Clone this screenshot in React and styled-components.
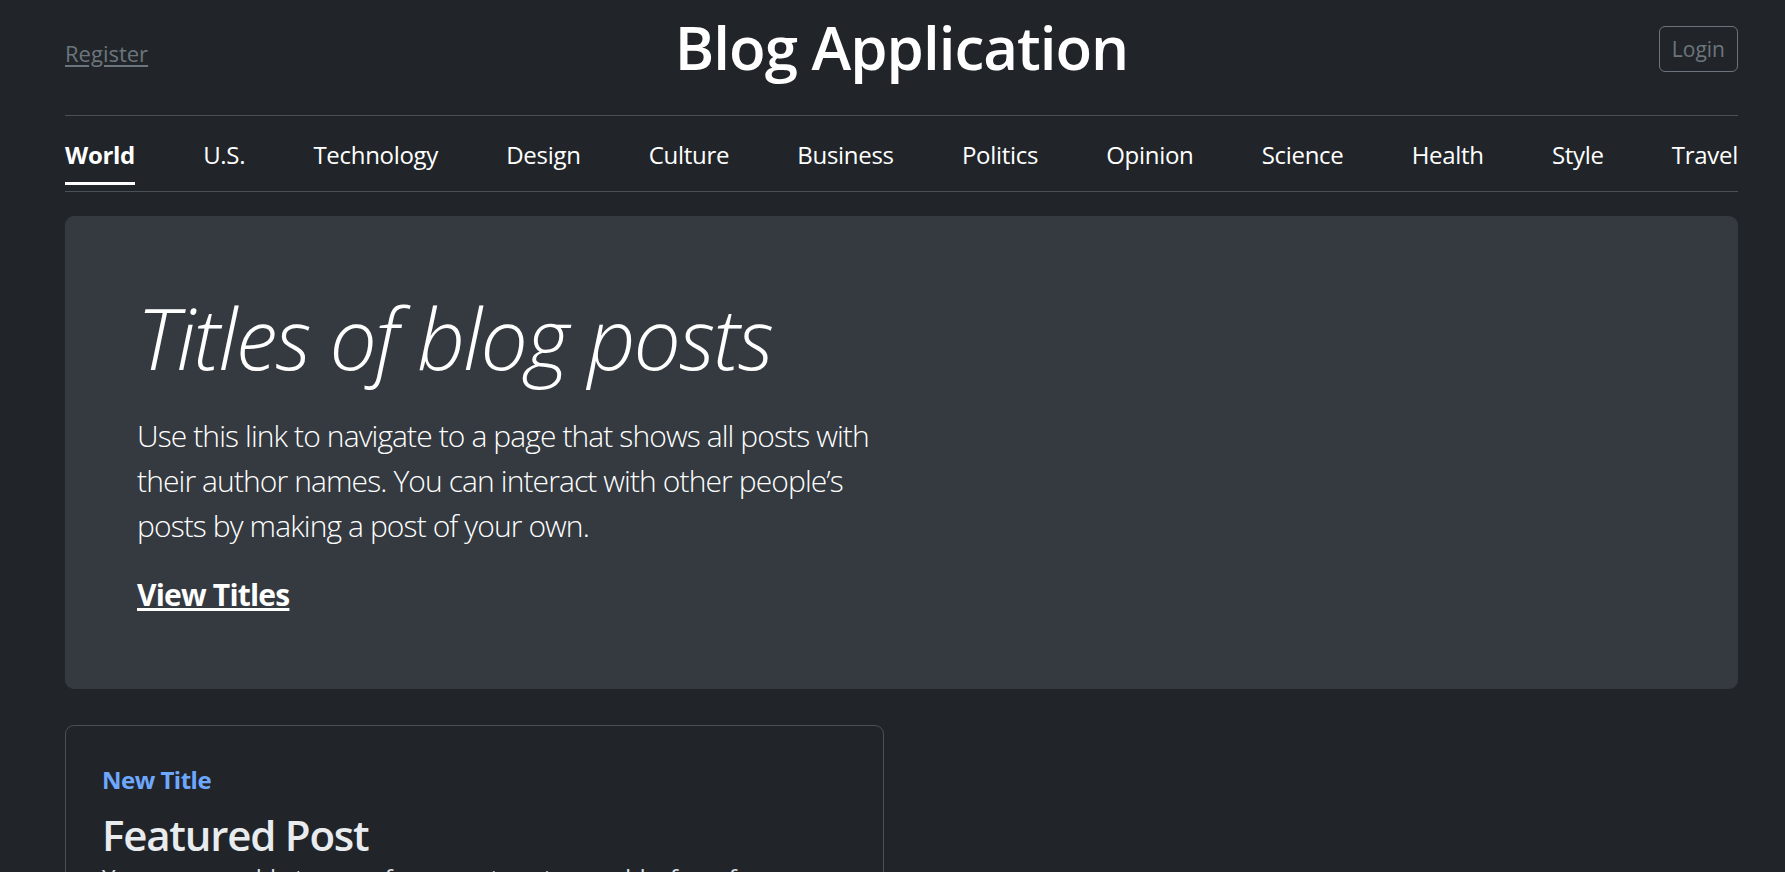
import React from 'react';
import styled, { createGlobalStyle } from 'styled-components';

const GlobalStyle = createGlobalStyle`
  html, body {
    margin: 0;
    padding: 0;
    background: #212529;
    color: #dee2e6;
    font-family: "Open Sans", "Noto Sans", sans-serif;
  }
  * {
    box-sizing: border-box;
  }
`;

const Page = styled.div`
  width: 1673px;
  margin-left: 65px;
`;

const Header = styled.header`
  display: grid;
  grid-template-columns: 1fr auto 1fr;
  align-items: center;
  height: 116px;
  padding-bottom: 21px;
  border-bottom: 1px solid #495057;
`;

const SideLink = styled.a`
  justify-self: start;
  margin-top: 12px;
  font-size: 22px;
  color: #6c757d;
  text-decoration: underline;
  text-underline-offset: 3px;
`;

const Logo = styled.h1`
  margin: 0;
  font-size: 60px;
  font-weight: 600;
  line-height: 1;
  letter-spacing: -1px;
  color: #fff;
  text-align: center;
`;

const LoginButton = styled.button`
  justify-self: end;
  margin-top: 4px;
  height: 46px;
  padding: 0 12px;
  font-family: inherit;
  font-size: 21px;
  color: #6c757d;
  background: transparent;
  border: 1px solid #6c757d;
  border-radius: 6px;
  cursor: pointer;
`;

const Nav = styled.nav`
  display: flex;
  justify-content: space-between;
  padding-bottom: 6px;
  border-bottom: 1px solid #495057;
`;

const NavLink = styled.a`
  padding: 21px 0 9px;
  font-size: 24px;
  line-height: 36px;
  letter-spacing: -0.3px;
  font-weight: ${(p) => (p.$active ? 700 : 400)};
  color: #fff;
  text-decoration: none;
  border-bottom: 3px solid ${(p) => (p.$active ? '#fff' : 'transparent')};
`;

const Hero = styled.section`
  margin-top: 24px;
  padding: 72px;
  background: #343a40;
  border-radius: 9px;
  color: #fff;
`;

const HeroBody = styled.div`
  width: 50%;
`;

const HeroTitle = styled.h2`
  margin: 0 0 24px;
  font-size: 84px;
  font-weight: 300;
  font-style: italic;
  line-height: 1.2;
  letter-spacing: -1.8px;
`;

const Lead = styled.p`
  margin: 0 0 24px;
  font-size: 30px;
  font-weight: 300;
  line-height: 1.5;
  letter-spacing: -0.9px;
`;

const LeadLink = styled.a`
  display: block;
  font-size: 30px;
  font-weight: 700;
  line-height: 1.5;
  letter-spacing: -0.8px;
  color: #fff;
  text-decoration: underline;
`;

const CardRow = styled.div`
  display: grid;
  grid-template-columns: 1fr 1fr;
  gap: 36px;
  margin-top: 36px;
`;

const Card = styled.article`
  padding: 36px;
  border: 1px solid #495057;
  border-radius: 9px;
  min-height: 380px;
`;

const Tag = styled.strong`
  display: inline-block;
  margin-bottom: 12px;
  font-size: 24px;
  line-height: 36px;
  letter-spacing: -0.5px;
  color: #6ea8fe;
`;

const CardTitle = styled.h3`
  margin: 0;
  font-size: 42px;
  font-weight: 600;
  line-height: 1.2;
  letter-spacing: -1.2px;
  color: #e9ecef;
`;

const CardText = styled.p`
  margin: 0;
  font-size: 24px;
  line-height: 36px;
  letter-spacing: -0.4px;
  color: #dee2e6;
`;

const sections = [
  'World', 'U.S.', 'Technology', 'Design', 'Culture', 'Business',
  'Politics', 'Opinion', 'Science', 'Health', 'Style', 'Travel',
];

export default function App() {
  return (
    <>
      <GlobalStyle />
      <Page>
        <Header>
          <SideLink href="#">Register</SideLink>
          <Logo>Blog Application</Logo>
          <LoginButton>Login</LoginButton>
        </Header>

        <Nav>
          {sections.map((s, i) => (
            <NavLink key={s} href="#" $active={i === 0}>{s}</NavLink>
          ))}
        </Nav>

        <Hero>
          <HeroBody>
            <HeroTitle>Titles of blog posts</HeroTitle>
            <Lead>
              Use this link to navigate to a page that shows all posts with
              their author names. You can interact with other people’s
              posts by making a post of your own.
            </Lead>
            <LeadLink href="#">View Titles</LeadLink>
          </HeroBody>
        </Hero>

        <CardRow>
          <Card>
            <Tag>New Title</Tag>
            <CardTitle>Featured Post</CardTitle>
            <CardText>You are now able to see a few recent posts, or add a few of your own.</CardText>
          </Card>
        </CardRow>
      </Page>
    </>
  );
}
